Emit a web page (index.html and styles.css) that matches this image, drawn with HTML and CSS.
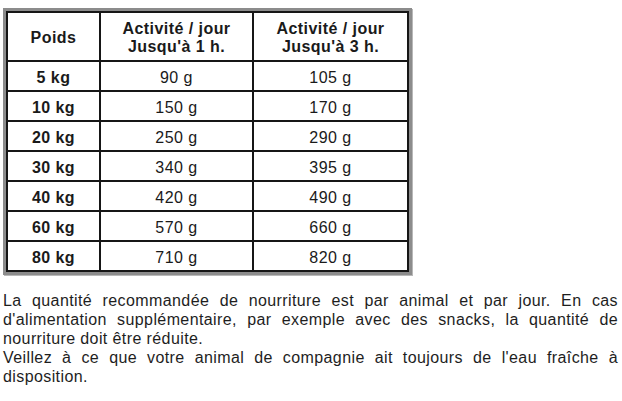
FILE: index.html
```html
<!DOCTYPE html>
<html lang="fr">
<head>
<meta charset="utf-8">
<link rel="stylesheet" href="styles.css">
</head>
<body>
<div class="frame">
<table class="ration">
<colgroup><col class="c1"><col class="c2"><col class="c3"></colgroup>
<thead>
<tr><th>Poids</th><th>Activité / jour<br>Jusqu'à 1 h.</th><th>Activité / jour<br>Jusqu'à 3 h.</th></tr>
</thead>
<tbody>
<tr><th>5 kg</th><td>90 g</td><td>105 g</td></tr>
<tr><th>10 kg</th><td>150 g</td><td>170 g</td></tr>
<tr><th>20 kg</th><td>250 g</td><td>290 g</td></tr>
<tr><th>30 kg</th><td>340 g</td><td>395 g</td></tr>
<tr><th>40 kg</th><td>420 g</td><td>490 g</td></tr>
<tr><th>60 kg</th><td>570 g</td><td>660 g</td></tr>
<tr><th>80 kg</th><td>710 g</td><td>820 g</td></tr>
</tbody>
</table>
</div>
<p class="note">La quantité recommandée de nourriture est par animal et par jour. En cas d'alimentation supplémentaire, par exemple avec des snacks, la quantité de nourriture doit être réduite.<br>Veillez à ce que votre animal de compagnie ait toujours de l'eau fraîche à disposition.</p>
</body>
</html>
```
FILE: styles.css
```css
html, body { margin: 0; padding: 0; background: #fff; }
body {
  font-family: "Liberation Sans", Arial, sans-serif;
  color: #1a1a1a;
  padding: 8px 4px 0 3px;
}
.frame {
  display: inline-block;
  border: 3px solid #8c8c8c;
  box-shadow: 1px 1px 0 #b8b8b8;
}
.ration {
  border-collapse: collapse;
  table-layout: fixed;
  width: 401px;
  font-size: 16px;
  letter-spacing: 0.45px;
}
.c1 { width: 93px; }
.c2 { width: 153px; }
.c3 { width: 155px; }
.ration th, .ration td {
  border: 2px solid #161616;
  text-align: center;
  padding: 3px 0 0 0;
  height: 25px;
}
.ration thead th {
  height: 44px;
  line-height: 18px;
}
.ration tbody th { font-weight: bold; }
.ration td { font-weight: normal; }
.note {
  margin: 12px 0 0 0;
  width: 615px;
  font-size: 16px;
  line-height: 19px;
  letter-spacing: 0.4px;
  text-align: justify;
  color: #1e1e1e;
}
```
